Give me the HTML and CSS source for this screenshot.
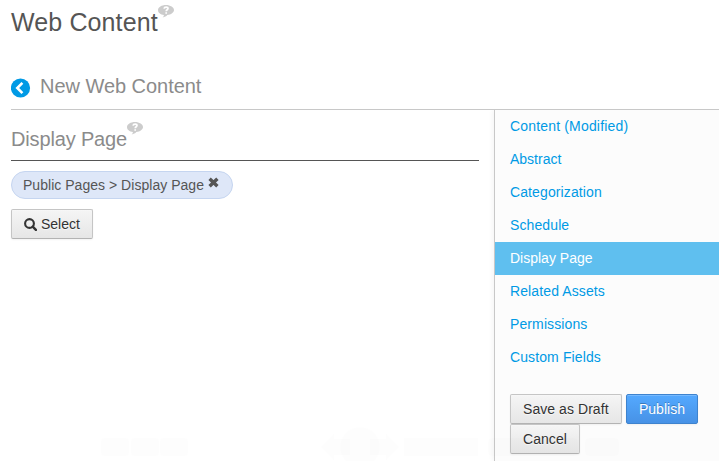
FILE: index.html
```
<!DOCTYPE html>
<html lang="en">
<head>
<meta charset="utf-8">
<title>Web Content</title>
<link rel="stylesheet" href="styles.css">
</head>
<body>
<svg class="defs" width="0" height="0"><symbol id="help" viewBox="0 0 16 13"><path fill="#ccc" d="M8 0C3.600 0 0 2.200 0 5s2.400 4.500 6 5c-.2 1.100-.7 1.800-1.400 2.400C6.700 12.200 8.300 11.300 9.300 10C13.100 9.600 16 7.600 16 5S12.400 0 8 0Z"/><path d="M6 3.700C6.200 2.600 7.200 2.100 8.100 2.100C9.300 2.100 10 2.800 10 3.600C10 4.900 8.200 4.700 8.200 6.300M8.200 7.300V8.700" fill="none" stroke="#fff" stroke-width="1.700"/></symbol></svg>
<header class="app-title"><h1>Web Content</h1><svg class="help"><use href="#help"/></svg></header>
<div class="page-head">
<svg class="back" viewBox="0 0 20 20"><circle cx="9.500" cy="10" r="9.600" fill="#009ae5"/><path d="M11.400 4.900L6.300 10l5.100 5.100" fill="none" stroke="#fff" stroke-width="2.600"/></svg>
<h2>New Web Content</h2>
</div>
<main class="layout">
<section class="panel">
<div class="legend"><h3>Display Page</h3><svg class="help"><use href="#help"/></svg></div>
<div class="pill"><span>Public Pages &gt; Display Page</span><svg class="remove" viewBox="0 0 11 11"><path d="M1.600 1.700l7.800 7.600m0-7.600l-7.800 7.600" stroke="#555" stroke-width="3.400"/></svg></div>
<button class="btn select"><svg class="search" viewBox="0 0 13 13"><circle cx="5.500" cy="5.500" r="4.400" fill="none" stroke="#333" stroke-width="2.100"/><path d="M8.700 8.700l3.200 3.200" stroke="#333" stroke-width="2.400" stroke-linecap="round"/></svg><span>Select</span></button>
</section>
<aside class="sidebar">
<nav>
<a class="wide">Content (Modified)</a>
<a>Abstract</a>
<a class="loose">Categorization</a>
<a class="loose">Schedule</a>
<a class="active">Display Page</a>
<a class="loose">Related Assets</a>
<a class="loose">Permissions</a>
<a class="loose">Custom Fields</a>
</nav>
<div class="actions"><button class="btn draft">Save as Draft</button><button class="btn publish">Publish</button><button class="btn cancel">Cancel</button></div>
</aside>
</main>
<svg class="watermark" viewBox="0 0 540 34"><rect x="1" y="11" width="28" height="18" rx="3"/><rect x="31" y="11" width="28" height="18" rx="3"/><rect x="60" y="11" width="28" height="18" rx="3"/><path d="M221 20l13-14v6h16v16h-16v6zM299 20L286 6v6h-16v16h16v6z"/><circle cx="260" cy="20" r="20"/><rect x="304" y="11" width="74" height="18"/><rect x="388" y="11" width="90" height="18" rx="4"/><rect x="485" y="11" width="34" height="18" rx="4"/></svg>
</body>
</html>
```
FILE: styles.css
```
* { box-sizing: border-box; }
body { margin: 0; height: 461px; overflow: hidden; background: #fff; font: 14px/20px "Liberation Sans", Arial, sans-serif; color: #555; }
h1, h2, h3 { margin: 0; font-weight: 400; white-space: nowrap; }
.defs { position: absolute; }
.help { width: 16px; height: 13px; flex: none; }
.app-title { display: flex; height: 69px; padding: 5px 0 0 11px; }
h1 { width: 147px; font-size: 25px; line-height: 34px; letter-spacing: .12px; }
.page-head { display: flex; height: 41px; margin-left: 11px; border-bottom: 1px solid #c8c8c8; }
.back { width: 20px; height: 20px; margin: 9px 9px 0 0; }
h2 { font-size: 20px; line-height: 34px; letter-spacing: -.04px; color: #8b8b8b; }
.layout { display: flex; height: 351px; padding-left: 11px; }
.panel { width: 468px; }
.legend { display: flex; height: 51px; padding-top: 12px; border-bottom: 1px solid #555; }
h3 { width: 116px; font-size: 20px; line-height: 34px; letter-spacing: -.15px; color: #8b8b8b; }
.pill { display: flex; width: 222px; height: 28px; margin-top: 10px; padding: 3px 11px; border: 1px solid #c5d5f0; border-radius: 14px; background: #dee7f8; }
.pill span { width: 185px; letter-spacing: .03px; white-space: nowrap; }
.remove { width: 11px; height: 11px; margin-top: 2px; }
.btn { height: 30px; padding: 0; border: 1px solid #c5c5c5; border-bottom-color: #b3b3b3; border-radius: 2px; background: linear-gradient(#f5f5f5, #e6e6e6); box-shadow: inset 0 1px 0 rgba(255,255,255,.2), 0 1px 2px rgba(0,0,0,.05); color: #333; font: 14px/20px "Liberation Sans", Arial, sans-serif; text-align: left; text-shadow: 0 1px 1px rgba(255,255,255,.75); white-space: nowrap; }
.select { display: flex; align-items: center; width: 82px; margin-top: 10px; padding-left: 12px; }
.search { width: 13px; height: 13px; margin: 1px 4px 0 0; }
.sidebar { width: 225px; margin-left: 15px; border-left: 1px solid #c8c8c8; background: #fcfcfc; box-shadow: -2px 0 4px rgba(0,0,0,.04); clip-path: inset(0 0 0 -8px); }
nav a { display: block; height: 33px; padding: 6px 15px; color: #009ae5; white-space: nowrap; }
nav .wide { letter-spacing: .17px; }
nav .loose { letter-spacing: .11px; }
nav .active { background: #5fbfef; color: #fff; }
.actions { display: flex; flex-wrap: wrap; column-gap: 4px; padding: 20px 0 0 15px; }
.actions .btn { padding-left: 12px; }
.draft { width: 112px; letter-spacing: .06px; }
.actions .publish { width: 72px; border-color: #3e83ce; background: linear-gradient(#54a9ff, #4792e6); color: #fff; text-shadow: 0 -1px 0 rgba(0,0,0,.25); }
.cancel { width: 70px; letter-spacing: .06px; }
.watermark { position: absolute; left: 100px; top: 427px; width: 540px; height: 34px; fill: #000; fill-opacity: .008; pointer-events: none; }
```
